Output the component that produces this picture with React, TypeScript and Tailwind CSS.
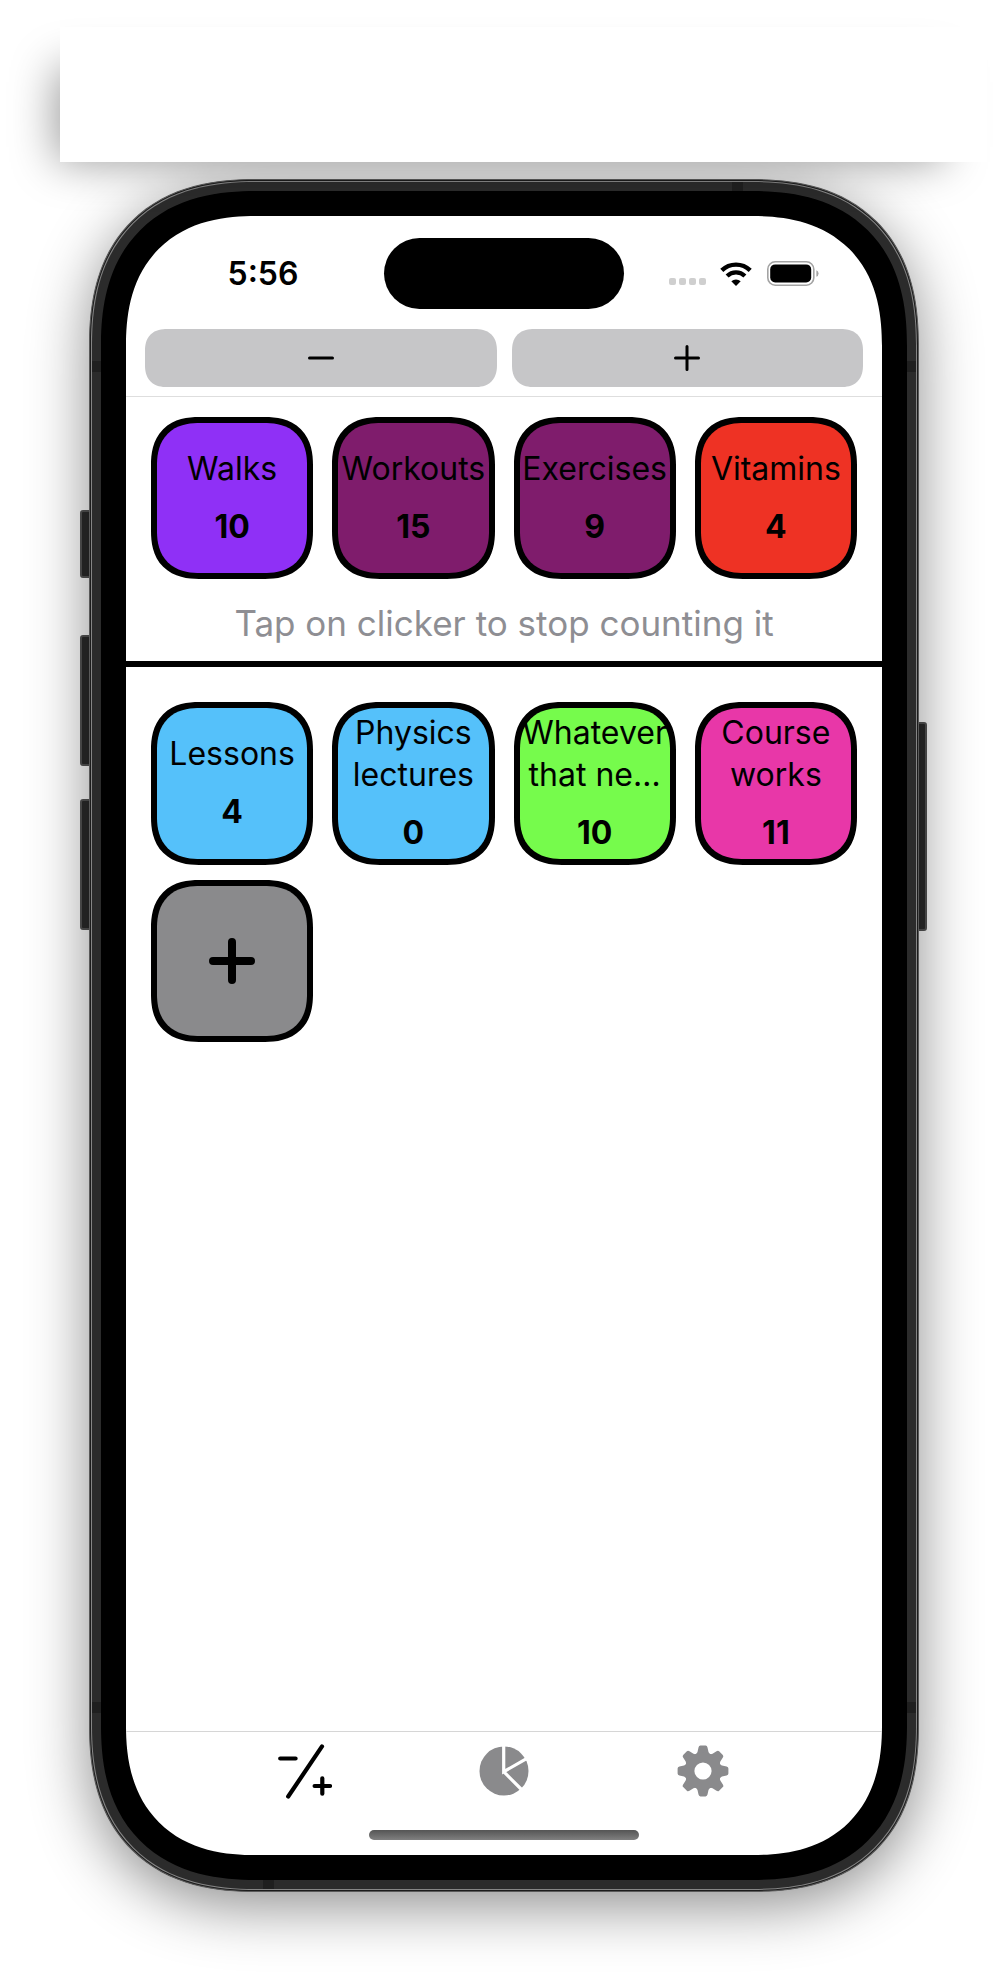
import React from "react";

type Clicker = { name: string; count: number; fill: string };

const counting: Clicker[] = [
  { name: "Walks", count: 10, fill: "bg-[#8f30f6]" },
  { name: "Workouts", count: 15, fill: "bg-[#7f1c6c]" },
  { name: "Exercises", count: 9, fill: "bg-[#7f1c6c]" },
  { name: "Vitamins", count: 4, fill: "bg-[#ee3224]" },
];

const stopped: Clicker[] = [
  { name: "Lessons", count: 4, fill: "bg-[#55c1fa]" },
  { name: "Physics lectures", count: 0, fill: "bg-[#55c1fa]" },
  { name: "Whatever that ne…", count: 10, fill: "bg-[#76fb4c]" },
  { name: "Course works", count: 11, fill: "bg-[#e837a8]" },
];

const tileShape =
  "aspect-square w-full rounded-[48px] border-6 border-black [corner-shape:superellipse(1.25)]";

function Tile({ name, count, fill }: Clicker) {
  return (
    <button
      type="button"
      className={`${tileShape} ${fill} flex flex-col items-center justify-center gap-4 text-[32px] leading-[42px]`}
    >
      <span className="text-center">{name}</span>
      <span className="font-bold">{count}</span>
    </button>
  );
}

function PlusIcon({ size, stroke }: { size: number; stroke: number }) {
  const h = stroke / 2;
  return (
    <svg width={size} height={size} viewBox={`0 0 ${size} ${size}`} stroke="#000" strokeWidth={stroke} strokeLinecap="round" aria-hidden="true">
      <path d={`M${h} ${size / 2}H${size - h}M${size / 2} ${h}V${size - h}`} />
    </svg>
  );
}

function MinusIcon() {
  return (
    <svg width="26" height="26" viewBox="0 0 26 26" stroke="#000" strokeWidth="3" strokeLinecap="round" aria-hidden="true">
      <path d="M1.5 13H24.5" />
    </svg>
  );
}

function WifiIcon() {
  return (
    <svg width="32" height="24" viewBox="0 0 32 24" fill="none" stroke="#000" aria-hidden="true">
      <path d="M1.8 8.4A20.3 20.3 0 0 1 30.2 8.4" strokeWidth="4.4" />
      <path d="M7.1 14A12.7 12.7 0 0 1 24.9 14" strokeWidth="4.2" />
      <path d="M16 24L11.3 19.2A7 7 0 0 1 20.7 19.2Z" fill="#000" stroke="none" />
    </svg>
  );
}

function BatteryIcon() {
  return (
    <svg width="52" height="25" viewBox="0 0 52 25" aria-hidden="true">
      <rect x="0.8" y="0.8" width="46" height="23.4" rx="7.5" fill="none" stroke="#a3a3a3" strokeWidth="1.6" />
      <rect x="3.2" y="3.4" width="41" height="18" rx="5" fill="#000" />
      <path d="M49.4 9.2a3.6 3.6 0 0 1 0 6.6Z" fill="#a3a3a3" />
    </svg>
  );
}

function CounterIcon() {
  return (
    <svg width="54" height="55" viewBox="0 0 54 55" fill="none" stroke="#000" strokeWidth="4.2" strokeLinecap="round" aria-hidden="true">
      <path d="M2.2 14.5H17.6M44 2.4L10.2 52.5M36.6 42H52M44.3 34.3V49.7" />
    </svg>
  );
}

function PieIcon() {
  return (
    <svg width="50" height="50" viewBox="0 0 50 50" fill="none" aria-hidden="true">
      <circle cx="25" cy="25" r="24.5" fill="#8a8a8c" />
      <path d="M24.7 0V25.7L48 12.3M24.7 25.7L43.5 44.5" stroke="#fff" strokeWidth="3.2" />
    </svg>
  );
}

const toothAngles = [0, 45, 90, 135, 180, 225, 270, 315];

function GearIcon() {
  return (
    <svg width="52" height="52" viewBox="-26 -26 52 52" fill="#8a8a8c" aria-hidden="true">
      {toothAngles.map((a) => (
        <path
          key={a}
          transform={`rotate(${a})`}
          d="M-8 -16.5Q-6 -17.2 -5.5 -19L-4.5 -23.6Q-4.1 -25.4 -2.6 -25.4H2.6Q4.1 -25.4 4.5 -23.6L5.5 -19Q6 -17.2 8 -16.5L0 0Z"
        />
      ))}
      <circle r="18.3" />
      <circle r="8.6" fill="#fff" />
    </svg>
  );
}

function StatusBar() {
  return (
    <div className="grid h-[113px] grid-cols-[1fr_240px_1fr] pt-[22px]">
      <div className="flex h-[71px] items-center justify-center pl-4 text-[32px] font-semibold leading-10">5:56</div>
      <div className="h-[71px] rounded-full bg-black" />
      <div className="flex h-[71px] items-center justify-end pr-[63px]">
        <div className="mr-[14px] flex gap-[3px] pt-4">
          <span className="size-[7px] rounded-[2px] bg-[#cfcfcf]" />
          <span className="size-[7px] rounded-[2px] bg-[#cfcfcf]" />
          <span className="size-[7px] rounded-[2px] bg-[#cfcfcf]" />
          <span className="size-[7px] rounded-[2px] bg-[#cfcfcf]" />
        </div>
        <div className="mr-[15px]">
          <WifiIcon />
        </div>
        <BatteryIcon />
      </div>
    </div>
  );
}

function Screen() {
  const control =
    "flex h-[58px] items-center justify-center rounded-[22px] bg-[#c6c6c8] [corner-shape:superellipse(1.25)]";
  return (
    <div className="flex grow flex-col overflow-hidden rounded-[130px] bg-white [corner-shape:superellipse(1.25)]">
      <StatusBar />
      <div className="grid grid-cols-2 gap-[15px] border-b border-[#dedede] px-[19px] pb-[9px]">
        <button type="button" aria-label="Decrease" className={control}>
          <MinusIcon />
        </button>
        <button type="button" aria-label="Increase" className={control}>
          <PlusIcon size={26} stroke={3} />
        </button>
      </div>
      <main className="grow">
        <section className="border-b-6 border-black pt-5">
          <div className="grid grid-cols-4 gap-[19px] px-[25px]">
            {counting.map((c) => (
              <Tile key={c.name} {...c} />
            ))}
          </div>
          <p className="pt-5 pb-[14px] text-center text-[35px] leading-[48px] text-[#8e8e93]">
            Tap on clicker to stop counting it
          </p>
        </section>
        <section className="grid grid-cols-4 gap-x-[19px] gap-y-[15px] px-[25px] pt-[35px]">
          {stopped.map((c) => (
            <Tile key={c.name} {...c} />
          ))}
          <button type="button" aria-label="Add clicker" className={`${tileShape} flex items-center justify-center bg-[#8a8a8c]`}>
            <PlusIcon size={46} stroke={8} />
          </button>
        </section>
      </main>
      <nav className="border-t border-[#d6d6d6]">
        <div className="grid h-[78px] grid-cols-3 px-20">
          <button type="button" aria-label="Clickers" className="flex items-center justify-center">
            <CounterIcon />
          </button>
          <button type="button" aria-label="Statistics" className="flex items-center justify-center">
            <PieIcon />
          </button>
          <button type="button" aria-label="Settings" className="flex items-center justify-center">
            <GearIcon />
          </button>
        </div>
        <div className="flex justify-center pt-5 pb-[15px]">
          <div className="h-[10px] w-[270px] rounded-full bg-linear-to-b from-[#555] to-[#808080]" />
        </div>
      </nav>
    </div>
  );
}

const sideKey = "absolute -z-10 w-[14px] rounded-[3px] border-2 border-[#555] bg-[#2b2b2b]";
const band = "absolute bg-[#1f1f1f]";

function Phone() {
  return (
    <div className="relative isolate mx-[89px] mt-[17px] mb-[88px] flex grow flex-col">
      <span className={`${sideKey} -left-[9px] top-[331px] h-[68px]`} />
      <span className={`${sideKey} -left-[9px] top-[456px] h-[131px]`} />
      <span className={`${sideKey} -left-[9px] top-[620px] h-[131px]`} />
      <span className={`${sideKey} -right-[8px] top-[543px] h-[209px]`} />
      <div className="flex grow flex-col rounded-[167px] border border-[#5a5a5a] bg-[#1c1c1c] p-px shadow-[0_14px_60px_rgba(0,0,0,0.45)] [corner-shape:superellipse(1.25)]">
        <div className="relative flex grow flex-col rounded-[165px] border border-[#858585] bg-[#2b2b2b] p-[9px] [corner-shape:superellipse(1.25)]">
          <span className={`${band} right-[173px] top-0 h-[9px] w-[11px]`} />
          <span className={`${band} bottom-0 left-[171px] h-[9px] w-[11px]`} />
          <span className={`${band} left-0 top-[179px] h-[11px] w-[9px]`} />
          <span className={`${band} right-0 top-[179px] h-[11px] w-[9px]`} />
          <span className={`${band} bottom-[176px] left-0 h-[11px] w-[9px]`} />
          <span className={`${band} bottom-[176px] right-0 h-[11px] w-[9px]`} />
          <div className="flex grow flex-col rounded-[155px] bg-black p-[25px] [corner-shape:superellipse(1.25)]">
            <Screen />
          </div>
        </div>
      </div>
    </div>
  );
}

export default function App() {
  return (
    <div className="flex min-h-screen flex-col bg-white font-['Inter',sans-serif] text-black">
      <div className="relative z-10 mt-[27px] mr-[21px] ml-[60px] h-[135px] bg-white shadow-[-24px_20px_45px_-20px_rgba(0,0,0,0.4)]" />
      <Phone />
    </div>
  );
}
